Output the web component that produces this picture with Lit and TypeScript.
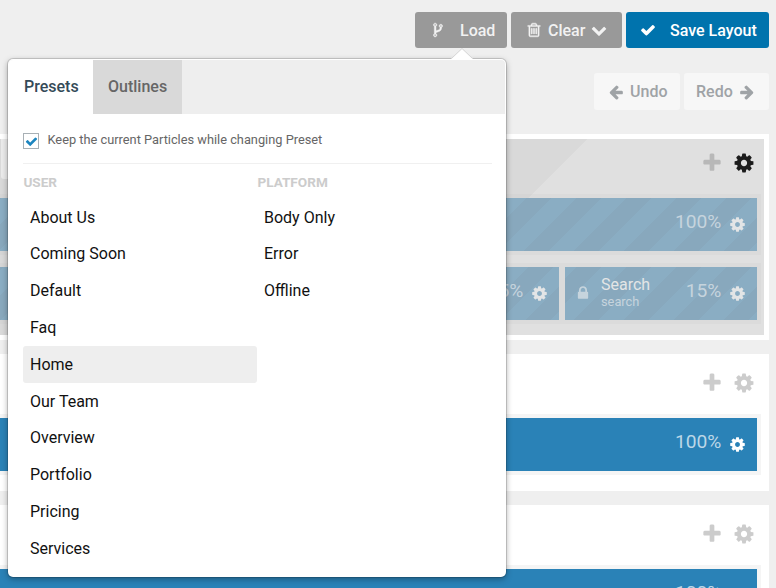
import { LitElement, html, svg, css } from "lit";
import { customElement, property } from "lit/decorators.js";

const ICONS: Record<string, string> = {
  check: "M1671 566q0 40-28 68l-724 724-136 136q-28 28-68 28t-68-28l-136-136-362-362q-28-28-28-68t28-68l136-136q28-28 68-28t68 28l294 295 656-657q28-28 68-28t68 28l136 136q28 28 28 68z",
  plus: "M1600 736v192q0 40-28 68t-68 28h-416v416q0 40-28 68t-68 28h-192q-40 0-68-28t-28-68v-416h-416q-40 0-68-28t-28-68v-192q0-40 28-68t68-28h416v-416q0-40 28-68t68-28h192q40 0 68 28t28 68v416h416q40 0 68 28t28 68z",
  cog: "M1152 896q0-106-75-181t-181-75-181 75-75 181 75 181 181 75 181-75 75-181zm512-109v222q0 12-8 23t-20 13l-185 28q-19 54-39 91 35 50 107 138 10 12 10 25t-9 23q-27 37-99 108t-94 71q-12 0-26-9l-138-108q-44 23-91 38-16 136-29 186-7 28-36 28h-222q-14 0-24.5-8.5t-11.5-21.5l-28-184q-49-16-90-37l-141 107q-10 9-25 9-14 0-25-11-126-114-165-168-7-10-7-23 0-12 8-23 15-21 51-66.5t54-70.5q-27-50-41-99l-183-27q-13-2-21-12.5t-8-23.5v-222q0-12 8-23t19-13l186-28q14-46 39-92-40-57-107-138-10-12-10-24 0-10 9-23 26-36 98.5-107.5t94.5-71.5q13 0 26 10l138 107q44-23 91-38 16-136 29-186 7-28 36-28h222q14 0 24.5 8.5t11.5 21.5l28 184q49 16 90 37l142-107q9-9 24-9 13 0 25 10 129 119 165 170 7 8 7 22 0 12-8 23-15 21-51 66.5t-54 70.5q26 50 41 98l183 28q13 2 21 12.5t8 23.5z",
  lock: "M640 768h512v-192q0-106-75-181t-181-75-181 75-75 181v192zm832 96v576q0 40-28 68t-68 28h-960q-40 0-68-28t-28-68v-576q0-40 28-68t68-28h32v-192q0-184 132-316t316-132 316 132 132 316v192h32q40 0 68 28t28 68z",
  left: "M1664 896v128q0 53-32.5 90.5t-84.5 37.5h-704l293 294q38 36 38 90t-38 90l-75 76q-37 37-90 37-52 0-91-37l-651-652q-37-37-37-90 0-52 37-91l651-650q38-38 91-38 52 0 90 38l75 74q38 38 38 91t-38 91l-293 293h704q52 0 84.5 37.5t32.5 90.5z",
  down: "M1683 808l-742 741q-19 19-45 19t-45-19l-742-741q-19-19-19-45.5t19-45.5l166-165q19-19 45-19t45 19l531 531 531-531q19-19 45-19t45 19l166 165q19 19 19 45.5t-19 45.5z",
  trash: "M704 736v576q0 14-9 23t-23 9h-64q-14 0-23-9t-9-23v-576q0-14 9-23t23-9h64q14 0 23 9t9 23zm256 0v576q0 14-9 23t-23 9h-64q-14 0-23-9t-9-23v-576q0-14 9-23t23-9h64q14 0 23 9t9 23zm256 0v576q0 14-9 23t-23 9h-64q-14 0-23-9t-9-23v-576q0-14 9-23t23-9h64q14 0 23 9t9 23zm128 724v-948h-896v948q0 22 7 40.5t14.5 27 10.5 8.5h832q3 0 10.5-8.5t14.5-27 7-40.5zm-672-1076h448l-48-117q-7-9-17-11h-317q-10 2-17 11zm928 32v64q0 14-9 23t-23 9h-96v948q0 83-47 143.5t-113 60.5h-832q-66 0-113-58.5t-47-141.5v-952h-96q-14 0-23-9t-9-23v-64q0-14 9-23t23-9h309l70-167q15-37 54-63t79-26h320q40 0 79 26t54 63l70 167h309q14 0 23 9t9 23z",
  fork: "M672 1472q0-40-28-68t-68-28-68 28-28 68 28 68 68 28 68-28 28-68zm0-1152q0-40-28-68t-68-28-68 28-28 68 28 68 68 28 68-28 28-68zm640 128q0-40-28-68t-68-28-68 28-28 68 28 68 68 28 68-28 28-68zm96 0q0 52-26 96.5t-70 69.5q-2 287-226 414-67 38-203 81-128 40-169.5 71t-41.5 100v26q44 25 70 69.5t26 96.5q0 80-56 136t-136 56-136-56-56-136q0-52 26-96.5t70-69.5v-820q-44-25-70-69.5t-26-96.5q0-80 56-136t136-56 136 56 56 136q0 52-26 96.5t-70 69.5v497q54-26 154-57 55-17 87.5-29.5t70.5-31 59-39.5 40.5-51 28-69.5 8.5-91.5q-44-25-70-69.5t-26-96.5q0-80 56-136t136-56 136 56 56 136z",
};

@customElement("ui-icon")
class UiIcon extends LitElement {
  @property() name = "cog";
  static styles = css`
    :host { display: block; flex: none; width: 16px; height: 16px; }
    .glyph { display: block; width: 100%; height: 100%; fill: currentColor; overflow: visible; }
    .fork, .trash { stroke: currentColor; stroke-width: 50; }
  `;
  render() {
    return html`<svg class="glyph ${this.name}" viewBox="0 0 1792 1792">${svg`<path d=${ICONS[this.name]}></path>`}</svg>`;
  }
}

const USER = ["About Us", "Coming Soon", "Default", "Faq", "Home", "Our Team", "Overview", "Portfolio", "Pricing", "Services"];
const PLATFORM = ["Body Only", "Error", "Offline"];

@customElement("app-root")
class AppRoot extends LitElement {
  static styles = css`
    :host {
      display: block; position: relative; width: 776px; height: 588px; overflow: hidden;
      background: #efefef; font-family: Roboto, sans-serif; font-size: 16px; box-sizing: border-box;
      color: #111;
    }
    * { box-sizing: border-box; }
    .toolbar { display: flex; justify-content: flex-end; gap: 4px; padding: 12px 7px 0 0; }
    .btn {
      height: 36px; border-radius: 3px; background: #999; color: #f2f2f2; display: flex;
      align-items: center; font-weight: 500; white-space: nowrap;
    }
    .load { width: 92px; padding-left: 15px; }
    .load span { margin-left: 14px; }
    .clear { width: 111px; padding-left: 15px; }
    .clear span { margin: 0 6px 0 6px; }
    .save { width: 143px; padding-left: 14px; background: #0073ad; color: #fff; }
    .save span { margin-left: 14px; }
    .history { display: flex; justify-content: flex-end; gap: 4px; padding: 25px 7px 0 0; }
    .hist { height: 37px; border-radius: 3px; background: #f7f7f7; color: #9fa3a6; display: flex; align-items: center; font-weight: 500; }
    .undo { width: 86px; padding-left: 14px; gap: 6px; }
    .redo { width: 85px; padding-left: 12px; gap: 6px; }
    .flip { transform: scaleX(-1); }
    .layout { margin-top: 24px; display: flex; flex-direction: column; gap: 14px; margin-right: 7px; }
    .section { background: #fff; height: 137px; padding-right: 8px; }
    .section.inherited { height: 206px; padding: 5px 5px 5px 0; }
    .shade {
      height: 196px; padding-right: 3px;
      background: linear-gradient(135deg, #d9d9d9 0, #d9d9d9 415px, #e0e0e0 415.5px);
    }
    .head { height: 60px; display: flex; justify-content: flex-end; align-items: flex-start; gap: 10px; padding: 18px 6px 0 0; color: #ccc; }
    .shade .head { height: 55px; padding-top: 13px; color: #b8b8b8; }
    .shade .head .strong { color: #1c1c1c; }
    .head ui-icon { width: 22px; height: 22px; }
    .field { width: 240px; height: 40px; margin: -13px auto 0 1px; background: #ebebeb; border-radius: 0 0 3px 3px; }
    .row { height: 61px; background: #f5f5f5; padding: 4px 4px 4px 0; display: flex; gap: 6px; }
    .shade .row { background: rgba(200, 200, 200, 0.2); }
    .shade .row + .row { margin-top: 8px; }
    .block { flex: 1; height: 53px; background: #2a82b7; display: flex; align-items: center; justify-content: flex-end; color: #fff; padding-right: 11px; }
    .shade .block { background: repeating-linear-gradient(-45deg, #8aadc3 0, #8aadc3 6px, #88a8bd 6px, #88a8bd 23.68px, #8aadc3 23.68px, #8aadc3 35.36px); color: #e3e5e6; }
    .block.search { flex: none; width: 192px; padding-left: 10px; }
    .search .names { margin: -2px auto 0 10px; font-size: 16px; line-height: 18px; }
    .names small { display: block; font-size: 12.8px; line-height: 15px; color: #c6d4dd; }
    .search .lock { color: #c6d4dd; margin-top: -2px; }
    .pct { font-size: 19.2px; color: #bcd7e7; margin-right: 7.6px; line-height: 22px; margin-top: -5px; }
    .shade .pct { color: #c6d4dd; }
    .block .gear { width: 17px; height: 17px; }
    .popup {
      position: absolute; left: 8px; top: 59px; width: 498px; height: 518px; background: #fff;
      border-radius: 5px; box-shadow: 0 0 0 1px rgba(0, 0, 0, 0.14), 0 2px 6px rgba(0, 0, 0, 0.35);
      padding: 1px;
    }
    .arrow { position: absolute; left: 443px; top: -11px; width: 22px; height: 12px; display: block; }
    .tabs { height: 54px; background: #eee; display: flex; border-radius: 4px 4px 0 0; overflow: hidden; }
    .tab { width: 89px; background: #d9d9d9; color: #666; font-weight: 500; line-height: 53px; padding-left: 15px; }
    .tab.on { width: 84px; background: #fff; color: #354a58; }
    .keep { margin: 0 13px 0 14px; height: 50px; border-bottom: 1px solid #f0f0f0; display: flex; align-items: center; font-size: 12.8px; color: #666; gap: 8.5px; padding-top: 2px; }
    .tick { width: 16px; height: 16px; border: 1px solid #a8b0b5; background: #fff; margin-top: 3px; color: #1c85bf; padding: 1px 1px; }
    .tick ui-icon { width: 13px; height: 13px; }
    .cols { display: grid; grid-template-columns: 234px 234px; margin-left: 14px; }
    .title { font-size: 13.6px; font-weight: 700; color: #ccc; line-height: 18px; padding: 9px 0 0 0.4px; height: 34.7px; }
    .item { height: 36.8px; line-height: 37.4px; padding-left: 7px; font-size: 16px; border-radius: 3px; }
    .item.on { background: #eee; }
  `;

  private section() {
    return html`<div class="section">
      <div class="head"><ui-icon name="plus"></ui-icon><ui-icon name="cog"></ui-icon></div>
      <div class="row"><div class="block"><span class="pct">100%</span><ui-icon class="gear" name="cog"></ui-icon></div></div>
    </div>`;
  }

  private column(title: string, items: string[]) {
    return html`<div>
      <div class="title">${title}</div>
      ${items.map((i) => html`<div class="item ${i === "Home" ? "on" : ""}">${i}</div>`)}
    </div>`;
  }

  render() {
    return html`
      <div class="toolbar">
        <div class="btn load"><ui-icon name="fork"></ui-icon><span>Load</span></div>
        <div class="btn clear"><ui-icon name="trash"></ui-icon><span>Clear</span><ui-icon name="down"></ui-icon></div>
        <div class="btn save"><ui-icon name="check"></ui-icon><span>Save Layout</span></div>
      </div>
      <div class="history">
        <div class="hist undo"><ui-icon name="left"></ui-icon><span>Undo</span></div>
        <div class="hist redo"><span>Redo</span><ui-icon class="flip" name="left"></ui-icon></div>
      </div>
      <div class="layout">
        <div class="section inherited">
          <div class="shade">
            <div class="head"><div class="field"></div><ui-icon name="plus"></ui-icon><ui-icon class="strong" name="cog"></ui-icon></div>
            <div class="row"><div class="block"><span class="pct">100%</span><ui-icon class="gear" name="cog"></ui-icon></div></div>
            <div class="row">
              <div class="block"><span class="pct">15%</span><ui-icon class="gear" name="cog"></ui-icon></div>
              <div class="block search">
                <ui-icon class="lock" name="lock"></ui-icon>
                <div class="names">Search<small>search</small></div>
                <span class="pct">15%</span><ui-icon class="gear" name="cog"></ui-icon>
              </div>
            </div>
          </div>
        </div>
        ${this.section()}${this.section()}
      </div>
      <div class="popup">
        <svg class="arrow" viewBox="0 0 22 12"><path d="M0 11L11 0.5L22 11V12H0z" fill="#fff"></path><path d="M0.5 10.5L11 0.5L21.5 10.5" fill="none" stroke="#d4d4d4"></path></svg>
        <div class="tabs"><div class="tab on">Presets</div><div class="tab">Outlines</div></div>
        <div class="keep"><div class="tick"><ui-icon name="check"></ui-icon></div><span>Keep the current Particles while changing Preset</span></div>
        <div class="cols">${this.column("USER", USER)}${this.column("PLATFORM", PLATFORM)}</div>
      </div>
    `;
  }
}
